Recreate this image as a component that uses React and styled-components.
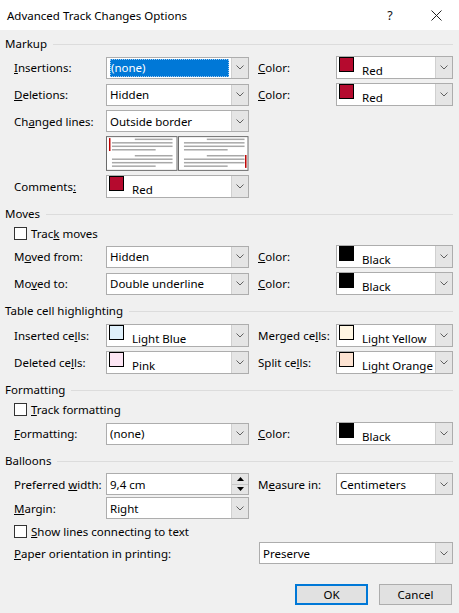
import React from 'react';
import styled, { createGlobalStyle } from 'styled-components';

const Global = createGlobalStyle`
  html, body { margin: 0; padding: 0; background: #f0f0f0; }
  body { font-family: "Noto Sans", "Segoe UI", sans-serif; font-size: 11.5px; color: #000; }
  * { box-sizing: border-box; }
`;

const Dialog = styled.div`
  width: 459px;
  height: 613px;
  background: #f0f0f0;
  display: flex;
  flex-direction: column;
  overflow: hidden;
`;

const TitleBar = styled.div`
  height: 30px;
  flex-shrink: 0;
  background: #fff;
  display: flex;
  align-items: center;
  padding-left: 7px;
`;

const Title = styled.div`
  flex: 1;
  font-size: 11.5px;
`;

const TitleButton = styled.div`
  width: 46px;
  height: 30px;
  display: flex;
  align-items: center;
  justify-content: center;
  font-size: 12.5px;
  color: #111;
`;

const Content = styled.div`
  display: flex;
  flex-direction: column;
  padding-top: 6px;
`;

const SectionHeader = styled.div`
  display: flex;
  align-items: center;
  height: 14px;
  line-height: 14px;
  padding-left: 5px;
  margin-right: 6px;
  margin-top: ${p => p.$mt ?? 9}px;
  margin-bottom: ${p => p.$mb ?? 6}px;
  &::after {
    content: "";
    flex: 1;
    height: 1px;
    background: #dcdcdc;
    margin-left: 6px;
  }
`;

const Rows = styled.div`
  display: flex;
  flex-direction: column;
  gap: ${p => p.$gap ?? 4}px;
`;

const Row = styled.div`
  display: grid;
  grid-template-columns: 92px 143px 87px 117px;
  align-items: center;
  padding-left: 14px;
  margin-top: ${p => p.$mt || 0}px;
`;

const Label = styled.div`
  padding-left: ${p => (p.$second ? 9 : 0)}px;
  white-space: nowrap;
  grid-column: ${p => p.$span || 'auto'};
`;

const ComboBox = styled.div`
  height: ${p => p.$h || 22}px;
  border: 1px solid #adadad;
  background: #fff;
  display: flex;
  align-items: stretch;
  grid-column: ${p => p.$col || 'auto'};
  margin-left: ${p => p.$ml || 0}px;
`;

const ComboValue = styled.div`
  flex: 1;
  display: flex;
  align-items: center;
  padding-left: 3px;
  white-space: nowrap;
  overflow: hidden;
`;

const Selected = styled.div`
  flex: 1;
  align-self: stretch;
  margin: 1px 2px 1px 0;
  background: #0078d7;
  color: #fff;
  outline: 1px dotted #9cc8ee;
  outline-offset: -1px;
  display: flex;
  align-items: center;
  padding-left: 1px;
`;

const Swatch = styled.div`
  width: 15px;
  height: 15px;
  border: 1px solid #000;
  background: ${p => p.$color};
  align-self: flex-start;
  margin: 0 8px 0 -1px;
  flex-shrink: 0;
`;

const SwatchText = styled.span`
  margin-top: 5px;
`;

const DropButton = styled.div`
  width: 17px;
  flex-shrink: 0;
  background: #e5e5e5;
  border-left: 1px solid #d0d0d0;
  display: flex;
  align-items: center;
  justify-content: center;
`;

const SpinButton = styled.div`
  width: 17px;
  flex-shrink: 0;
  background: #e5e5e5;
  border-left: 1px solid #d0d0d0;
  display: flex;
  flex-direction: column;
`;

const SpinHalf = styled.div`
  flex: 1;
  display: flex;
  align-items: center;
  justify-content: center;
  border-top: ${p => (p.$bottom ? '1px solid #c8c8c8' : 'none')};
`;

const CheckRow = styled.label`
  display: flex;
  align-items: center;
  height: 16px;
  padding-left: 14px;
  margin-top: ${p => p.$mt || 0}px;
`;

const CheckBox = styled.span`
  width: 13px;
  height: 13px;
  border: 1px solid #333;
  background: #fff;
  margin-right: 4px;
`;

const Preview = styled.div`
  grid-column: 2;
  height: 35px;
  display: flex;
`;

const Footer = styled.div`
  display: flex;
  justify-content: flex-end;
  gap: 11px;
  padding-right: 7px;
  margin-top: 20px;
`;

const Button = styled.div`
  width: 73px;
  height: 21px;
  background: #e1e1e1;
  border: ${p => (p.$default ? '2px solid #0078d7' : '1px solid #adadad')};
  display: flex;
  align-items: center;
  justify-content: center;
`;

const Chevron = () => (
  <svg width="8" height="5" viewBox="0 0 8 5">
    <polyline points="0.5,0.5 4,4 7.5,0.5" fill="none" stroke="#606060" strokeWidth="1" />
  </svg>
);

const Combo = ({ value, swatch, selected, col, ml, h }) => (
  <ComboBox $col={col} $ml={ml} $h={h || (swatch ? 23 : 22)}>
    <ComboValue>
      {selected ? (
        <Selected>{value}</Selected>
      ) : swatch ? (
        <>
          <Swatch $color={swatch} />
          <SwatchText>{value}</SwatchText>
        </>
      ) : (
        value
      )}
    </ComboValue>
    <DropButton>
      <Chevron />
    </DropButton>
  </ComboBox>
);

const PreviewPanel = ({ side }) => {
  const line = (y, x1, x2) => <rect key={`${y}-${x1}`} x={x1} y={y} width={x2 - x1} height="1.5" fill="#a8a8a8" />;
  const group = base => [
    line(base, 29, 67),
    line(base + 3.5, 6, 67),
    line(base + 7, 6, 67),
    line(base + 10.5, 6, 50),
  ];
  return (
    <svg width="72" height="35" viewBox="0 0 72 35">
      <rect x="0.5" y="0.5" width={side === 'left' ? 71 : 70} height="34" fill="#fff" stroke="#6b6b6b" />
      {group(2.5)}
      {group(19)}
      {side === 'left' ? (
        <rect x="3" y="2" width="1.5" height="13" fill="#c00000" />
      ) : (
        <rect x="67.5" y="19" width="1.5" height="13" fill="#c00000" />
      )}
    </svg>
  );
};

const SpinArrow = ({ up }) => (
  <svg width="7" height="4" viewBox="0 0 7 4">
    <polygon points={up ? '0,4 7,4 3.5,0' : '0,0 7,0 3.5,4'} fill="#000" />
  </svg>
);

const RED = '#b50a2e';

export default function App() {
  return (
    <>
      <Global />
      <Dialog>
        <TitleBar>
          <Title>Advanced Track Changes Options</Title>
          <TitleButton>?</TitleButton>
          <TitleButton>
            <svg width="11" height="11" viewBox="0 0 11 11">
              <path d="M0.5 0.5 L10.5 10.5 M10.5 0.5 L0.5 10.5" stroke="#222" strokeWidth="1" />
            </svg>
          </TitleButton>
        </TitleBar>
        <Content>
          <SectionHeader $mt={1} $mb={5}>Markup</SectionHeader>
          <Rows>
            <Row>
              <Label><u>I</u>nsertions:</Label>
              <Combo value="(none)" selected />
              <Label $second><u>C</u>olor:</Label>
              <Combo value="Red" swatch={RED} />
            </Row>
            <Row>
              <Label><u>D</u>eletions:</Label>
              <Combo value="Hidden" />
              <Label $second><u>C</u>olor:</Label>
              <Combo value="Red" swatch={RED} />
            </Row>
            <Row>
              <Label>Ch<u>a</u>nged lines:</Label>
              <Combo value="Outside border" />
            </Row>
            <Row>
              <Preview>
                <PreviewPanel side="left" />
                <PreviewPanel side="right" />
              </Preview>
            </Row>
            <Row>
              <Label>Comments<u>:</u></Label>
              <Combo value="Red" swatch={RED} />
            </Row>
          </Rows>

          <SectionHeader $mb={4}>Moves</SectionHeader>
          <Rows>
            <CheckRow>
              <CheckBox />
              <span>Trac<u>k</u> moves</span>
            </CheckRow>
            <Row>
              <Label>M<u>o</u>ved from:</Label>
              <Combo value="Hidden" />
              <Label $second><u>C</u>olor:</Label>
              <Combo value="Black" swatch="#000" />
            </Row>
            <Row>
              <Label>Mo<u>v</u>ed to:</Label>
              <Combo value="Double underline" />
              <Label $second><u>C</u>olor:</Label>
              <Combo value="Black" swatch="#000" />
            </Row>
          </Rows>

          <SectionHeader>Table cell highlighting</SectionHeader>
          <Rows>
            <Row>
              <Label>Inserted ce<u>l</u>ls:</Label>
              <Combo value="Light Blue" swatch="#dff0fb" />
              <Label $second>Merged ce<u>l</u>ls:</Label>
              <Combo value="Light Yellow" swatch="#fff6e3" />
            </Row>
            <Row>
              <Label>Deleted ce<u>l</u>ls:</Label>
              <Combo value="Pink" swatch="#fde6f4" />
              <Label $second>Split ce<u>l</u>ls:</Label>
              <Combo value="Light Orange" swatch="#fde3d2" />
            </Row>
          </Rows>

          <SectionHeader $mb={4}>Formatting</SectionHeader>
          <Rows $gap={5}>
            <CheckRow>
              <CheckBox />
              <span><u>T</u>rack formatting</span>
            </CheckRow>
            <Row>
              <Label><u>F</u>ormatting:</Label>
              <Combo value="(none)" />
              <Label $second><u>C</u>olor:</Label>
              <Combo value="Black" swatch="#000" />
            </Row>
          </Rows>

          <SectionHeader $mb={5}>Balloons</SectionHeader>
          <Rows $gap={2}>
            <Row>
              <Label>Preferred <u>w</u>idth:</Label>
              <ComboBox>
                <ComboValue>9,4 cm</ComboValue>
                <SpinButton>
                  <SpinHalf><SpinArrow up /></SpinHalf>
                  <SpinHalf $bottom><SpinArrow /></SpinHalf>
                </SpinButton>
              </ComboBox>
              <Label $second>M<u>e</u>asure in:</Label>
              <Combo value="Centimeters" />
            </Row>
            <Row>
              <Label><u>M</u>argin:</Label>
              <Combo value="Right" />
            </Row>
            <CheckRow $mt={2}>
              <CheckBox />
              <span><u>S</u>how lines connecting to text</span>
            </CheckRow>
            <Row $mt={1}>
              <Label $span="1 / 3"><u>P</u>aper orientation in printing:</Label>
              <Combo value="Preserve" col="3 / 5" ml={10} />
            </Row>
          </Rows>

          <Footer>
            <Button $default>OK</Button>
            <Button>Cancel</Button>
          </Footer>
        </Content>
      </Dialog>
    </>
  );
}
